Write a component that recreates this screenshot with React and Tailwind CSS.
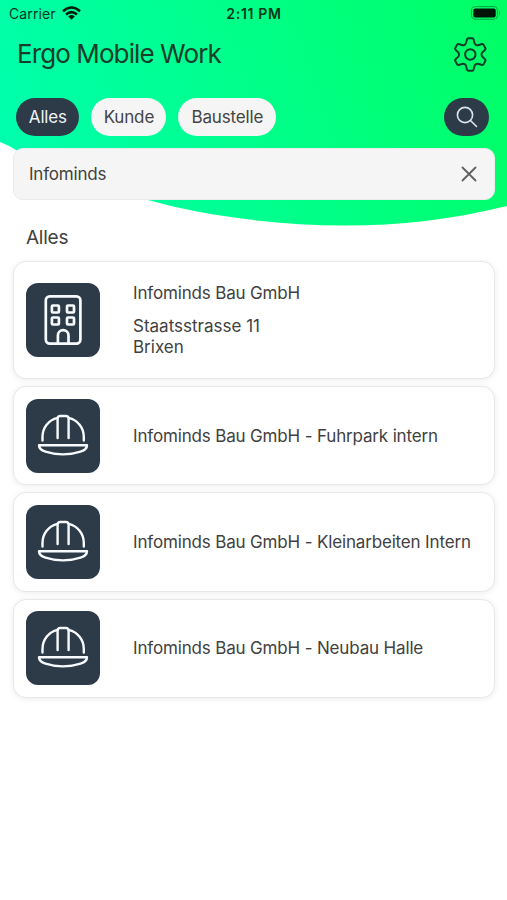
import clsx from 'clsx'

const filters = [
  { label: 'Alles', width: 'w-[63px]', active: true },
  { label: 'Kunde', width: 'w-[75px]' },
  { label: 'Baustelle', width: 'w-[98px]' },
]

const results = [
  { type: 'customer', title: 'Infominds Bau GmbH', address: ['Staatsstrasse 11', 'Brixen'] },
  { type: 'site', title: 'Infominds Bau GmbH - Fuhrpark intern' },
  { type: 'site', title: 'Infominds Bau GmbH - Kleinarbeiten Intern' },
  { type: 'site', title: 'Infominds Bau GmbH - Neubau Halle' },
]

// one gear tooth, valley to valley, repeated every 60 degrees
const gearPath = (() => {
  const tooth = [[-5.6, -9.7], [-4.1, -10.6], [-3.8, -13], [-3.4, -16.3], [-1.8, -16.3], [1.8, -16.3], [3.4, -16.3], [3.8, -13], [4.1, -10.6], [5.6, -9.7]]
  let d = ''
  for (let i = 0; i < 6; i++) {
    const a = (i * Math.PI) / 3
    const p = tooth.map(([x, y]) =>
      `${(x * Math.cos(a) - y * Math.sin(a)).toFixed(2)} ${(x * Math.sin(a) + y * Math.cos(a)).toFixed(2)}`,
    )
    d += `${i ? 'L' : 'M'}${p[0]}Q${p[1]} ${p[2]}Q${p[3]} ${p[4]}L${p[5]}Q${p[6]} ${p[7]}Q${p[8]} ${p[9]}`
  }
  return d + 'Z'
})()

function GearIcon() {
  return (
    <svg className="h-9 w-9" viewBox="-18.3 -18.5 36 36" fill="none" stroke="#103f27" strokeWidth="2" strokeLinejoin="round">
      <path d={gearPath} />
      <circle r="5.2" />
    </svg>
  )
}

function Header() {
  return (
    <svg className="absolute inset-x-0 top-0 -z-10 h-[230px] w-full" viewBox="0 0 507 230" preserveAspectRatio="none">
      <defs>
        <linearGradient id="header" gradientUnits="userSpaceOnUse" x1="0" y1="150" x2="510" y2="-30">
          <stop offset="0" stopColor="#00ffae" />
          <stop offset="0.5" stopColor="#00ff88" />
          <stop offset="1" stopColor="#00ff62" />
        </linearGradient>
      </defs>
      <path d="M0 0H507V206C450 220 400 225.5 345 225.5C278 225.5 205 216 148 200C90 183 45 165 16 150Q8 145 0 142Z" fill="url(#header)" />
    </svg>
  )
}

function StatusBar() {
  return (
    <div className="flex h-7 items-center justify-between pb-px pl-[9px] pr-[6px] text-[#06351f]">
      <div className="flex w-[150px] items-center gap-[6px]">
        <span className="text-[14px] tracking-[0.1px]">Carrier</span>
        <svg className="-mt-px h-[14px] w-[19px]" viewBox="0 0 19 14" fill="none" stroke="#001c0d" strokeWidth="2.5">
          <path d="M1 5.2Q9.5 -2.3 18 5.2M4 8.5Q9.5 3.7 15 8.5" />
          <path d="M6.2 10.5Q9.5 7.7 12.8 10.5L9.5 13.7Z" fill="#001c0d" stroke="none" />
        </svg>
      </div>
      <span className="-ml-[2px] text-[14px] font-semibold tracking-[0.7px] text-[#003619]">2:11 PM</span>
      <div className="flex w-[150px] justify-end">
        <svg className="-mt-px h-[14px] w-[30px]" viewBox="0 0 30 14">
          <rect x="0.5" y="0.6" width="26" height="12.6" rx="3.5" fill="none" stroke="#00a346" />
          <rect x="2.3" y="2.4" width="22.4" height="9" rx="2" fill="#001407" />
          <path d="M28 4.5Q30 6.9 28 9.3Z" fill="#00a346" />
        </svg>
      </div>
    </div>
  )
}

function BuildingIcon() {
  return (
    <svg className="h-[74px] w-[74px]" viewBox="0 0 74 74" fill="none" stroke="#f7fbff" strokeWidth="2.7">
      <rect x="19.8" y="13.4" width="34.6" height="47.2" rx="4" />
      {[[25.9, 22.5], [41, 22.5], [25.9, 34.5], [41, 34.5]].map(([x, y]) => (
        <rect key={`${x}-${y}`} x={x} y={y} width="7" height="7" rx="1" />
      ))}
      <path d="M31.9 60V52.5A5.3 5.3 0 0 1 42.5 52.5V60" />
    </svg>
  )
}

function HelmetIcon() {
  return (
    <svg className="h-[74px] w-[74px]" viewBox="0 0 74 74" fill="none" stroke="#f7fbff" strokeWidth="2.4" strokeLinecap="round" strokeLinejoin="round">
      <path d="M16.5 41.5V38C16.5 28.5 22.5 21 31.6 18.9M42.6 18.9C51.7 21 57.8 28.5 57.8 38V41.5" />
      <path d="M31.6 39V18.9Q32.2 17 34.2 17H40Q42 17 42.6 18.9V39" />
      <path d="M13 46.2H61Q61 50.5 54.5 52.7C44 56.2 30 56.2 19.5 52.7Q13 50.5 13 46.2Z" />
    </svg>
  )
}

function ResultCard({ type, title, address }) {
  return (
    <div
      className={clsx(
        'flex items-center rounded-[13px] border border-[#e8e8e8] bg-white pl-[12px] shadow-[0_1px_6px_rgba(0,0,0,0.08)]',
        address ? 'h-[118px]' : 'h-[99.6px]',
      )}
    >
      <div className="h-[74px] w-[74px] shrink-0 rounded-[12px] bg-[#2d3a47]">
        {type === 'customer' ? <BuildingIcon /> : <HelmetIcon />}
      </div>
      <div className="ml-[33px] whitespace-nowrap pt-px text-[17px] leading-[21px]">
        <p className="tracking-[-0.16px]">{title}</p>
        {address && (
          <div className="mt-3">
            {address.map((line) => (
              <p key={line}>{line}</p>
            ))}
          </div>
        )}
      </div>
    </div>
  )
}

export default function App() {
  return (
    <main className="relative isolate min-h-[900px] w-full overflow-hidden bg-white font-['Inter',sans-serif] text-[#414141]">
      <Header />
      <StatusBar />

      <header className="flex h-[52px] items-center justify-between pl-[17px] pr-[19px]">
        <h1 className="text-[26px] leading-8 tracking-[-0.9px] text-[#173d2b]">Ergo Mobile Work</h1>
        <button aria-label="Einstellungen">
          <GearIcon />
        </button>
      </header>

      <div className="mt-[18px] flex h-[38px] items-center gap-3 pl-[16.4px] pr-[18px]">
        {filters.map((filter) => (
          <button
            key={filter.label}
            className={clsx(
              'h-[38px] rounded-full pt-px text-[17px] tracking-[-0.15px]',
              filter.width,
              filter.active ? 'bg-[#2d3a47] text-[#eef2f6]' : 'bg-[#f5f5f5] text-[#444444]',
            )}
          >
            {filter.label}
          </button>
        ))}
        <button aria-label="Suchen" className="ml-auto flex h-[38px] w-[45px] items-center justify-center rounded-full bg-[#2d3a47]">
          <svg className="h-[22px] w-[22px]" viewBox="0 0 22 22" fill="none" stroke="#dce4ec" strokeWidth="1.6" strokeLinecap="round">
            <circle cx="9" cy="9" r="7.6" />
            <path d="M14.5 14.5L20.5 20.5" />
          </svg>
        </button>
      </div>

      <div className="ml-[13px] mr-[12.5px] mt-3 flex h-[52px] items-center justify-between rounded-[10px] border border-[#ebebeb] bg-[#f5f5f5] pl-[15px] pr-[17px]">
        <span className="pt-px text-[17px] tracking-[-0.2px]">Infominds</span>
        <svg className="h-4 w-4" viewBox="0 0 16 16" fill="none" stroke="#606060" strokeWidth="1.8" strokeLinecap="round">
          <path d="M1.5 1.5L14.5 14.5M14.5 1.5L1.5 14.5" />
        </svg>
      </div>

      <h2 className="ml-[26px] mt-[24px] text-[19px] leading-7 tracking-[-0.25px]">Alles</h2>

      <section className="ml-[13px] mr-[12.5px] mt-[9px] flex flex-col gap-[6.8px]">
        {results.map((result) => (
          <ResultCard key={result.title} {...result} />
        ))}
      </section>
    </main>
  )
}
